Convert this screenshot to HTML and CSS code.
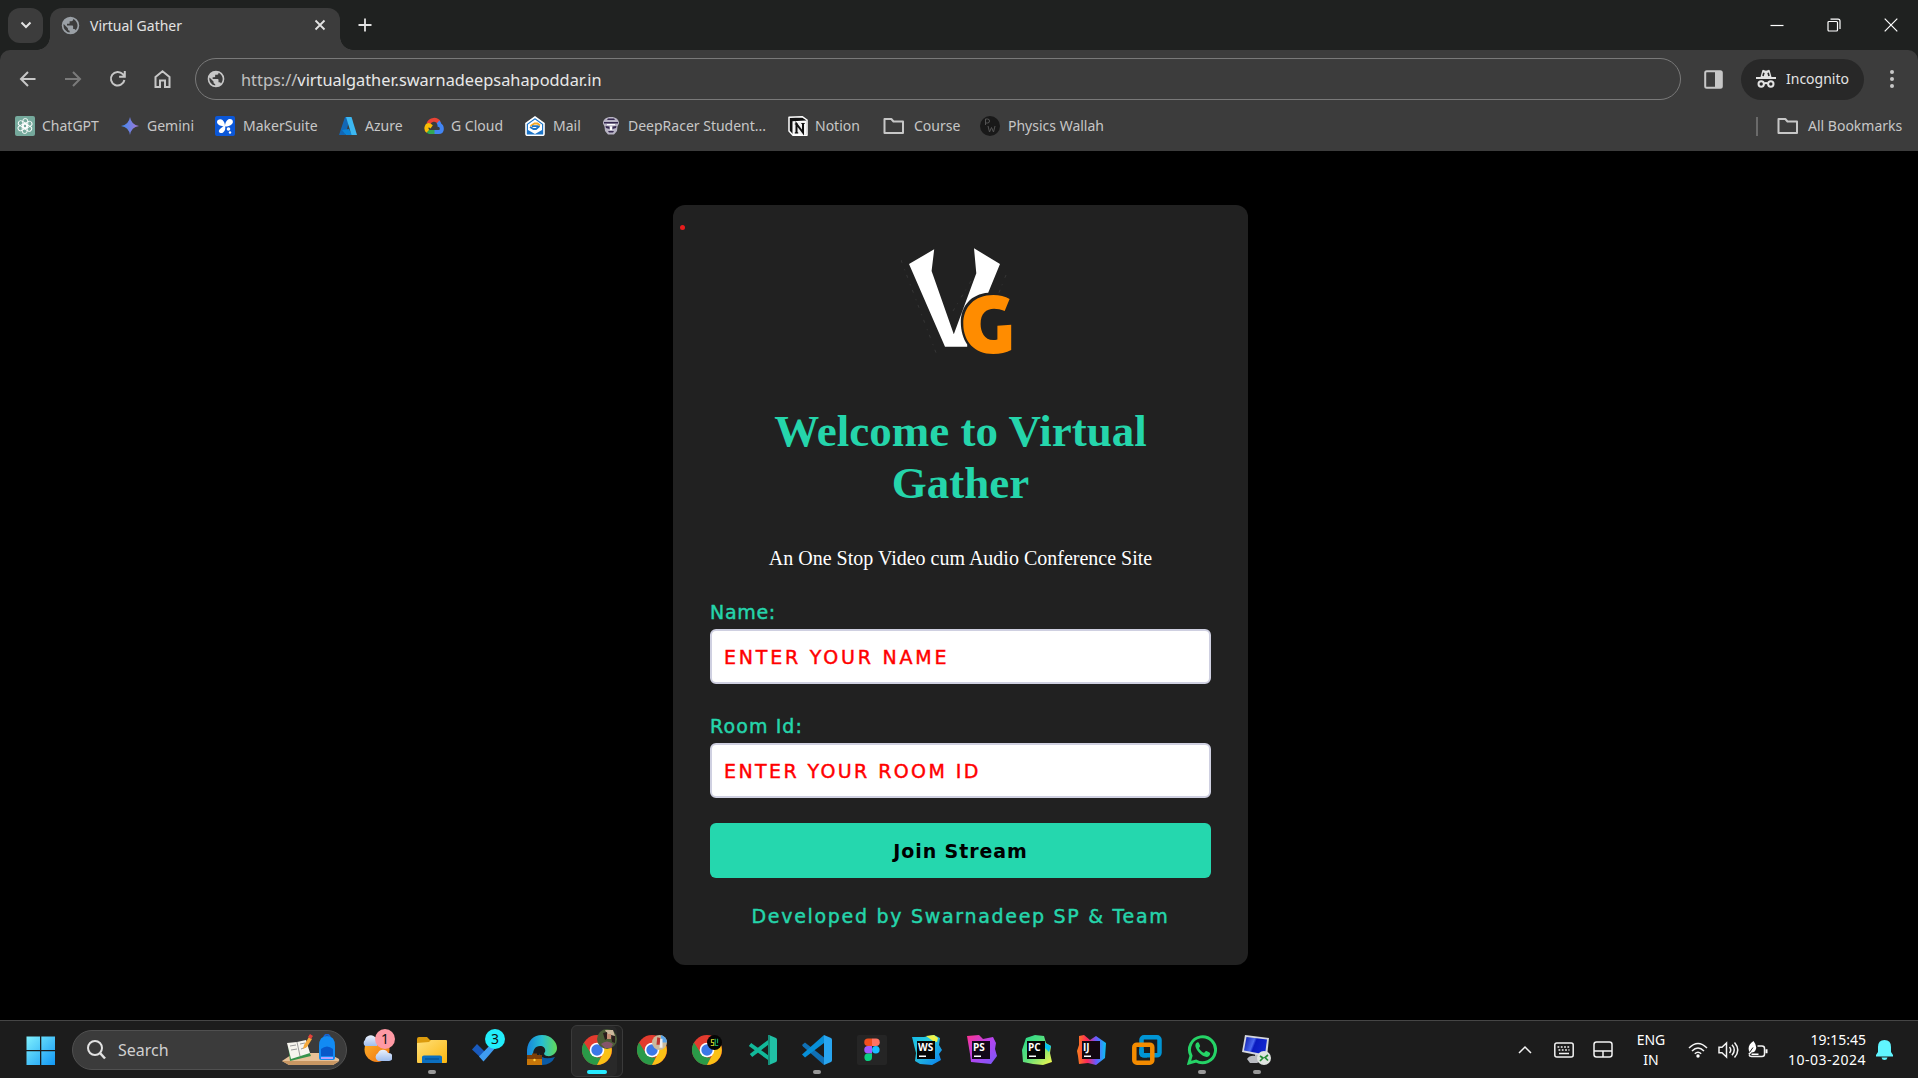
FILE: index.html
```html
<!DOCTYPE html>
<html lang="en">
<head>
<meta charset="utf-8">
<title>Virtual Gather</title>
<link rel="stylesheet" href="styles.css">
</head>
<body>
<svg class="defs" aria-hidden="true">
  <defs>
    <symbol id="globe" viewBox="0 0 24 24"><path fill="currentColor" d="M12 2a10 10 0 1 0 0 20 10 10 0 0 0 0-20zm-1 17.9A8 8 0 0 1 4.2 10.200L9 15v1a2 2 0 0 0 2 2zm6.900-2.500A2 2 0 0 0 16 16h-1v-3a1 1 0 0 0-1-1H8v-2h2a1 1 0 0 0 1-1V7h2a2 2 0 0 0 2-2v-.4a8 8 0 0 1 2.900 12.800z"/></symbol>
    <symbol id="folder" viewBox="0 0 22 18"><path fill="none" stroke="currentColor" stroke-width="2" stroke-linejoin="round" d="M1.500 2h6.800l2.200 2.500h9.500v11.500H1.500z"/></symbol>
    <symbol id="chrome" viewBox="0 0 30 30">
      <circle cx="15" cy="15" r="15" fill="#e33b2e"/>
      <path fill="#2a9a48" d="M15 30A15 15 0 0 1 2 7.500L9 18.500l6 4 4 0z"/>
      <path fill="#fbc116" d="M28 7.800A15 15 0 0 1 15 30l6-11.500 1-6-7-4.700z"/>
      <circle cx="15" cy="15" r="7.300" fill="#fff"/><circle cx="15" cy="15" r="5.700" fill="#3b78e7"/>
    </symbol>
    <linearGradient id="win" x2="1" y2="1"><stop stop-color="#7ff0fd"/><stop offset="1" stop-color="#1298f5"/></linearGradient>
    <linearGradient id="fold" x2="1" y2="1"><stop stop-color="#ffe07a"/><stop offset="1" stop-color="#fbb60f"/></linearGradient>
    <linearGradient id="gem" x2="1"><stop stop-color="#3d8bf0"/><stop offset="1" stop-color="#a477d6"/></linearGradient>
    <linearGradient id="edge" x2="1"><stop stop-color="#1685dc"/><stop offset=".5" stop-color="#27bfd1"/><stop offset="1" stop-color="#62d957"/></linearGradient>
    <linearGradient id="ws" x2="1" y2="1"><stop stop-color="#10b8ec"/><stop offset=".35" stop-color="#2bc9d9"/><stop offset="1" stop-color="#087cf0"/></linearGradient>
    <linearGradient id="ps" x2="1" y2="1"><stop stop-color="#ff318c"/><stop offset=".5" stop-color="#b345f1"/><stop offset="1" stop-color="#765af8"/></linearGradient>
    <linearGradient id="pc" x2="1" y2="1"><stop stop-color="#21d789"/><stop offset=".5" stop-color="#5fe07c"/><stop offset="1" stop-color="#fcf84a"/></linearGradient>
    <linearGradient id="ij" x2="1"><stop stop-color="#fc801d"/><stop offset=".35" stop-color="#fe2857"/><stop offset=".65" stop-color="#6b57ff"/><stop offset="1" stop-color="#07c3f2"/></linearGradient>
    <linearGradient id="sun" x2="1" y2="1"><stop stop-color="#ffb72b"/><stop offset="1" stop-color="#ee6f12"/></linearGradient>
    <linearGradient id="cloud" y2="1" x2="0"><stop stop-color="#eaf1fc"/><stop offset="1" stop-color="#9fbdee"/></linearGradient>
    <linearGradient id="screen" x2="1" y2=".3"><stop stop-color="#0716a8"/><stop offset=".45" stop-color="#4a68ef"/><stop offset=".55" stop-color="#0a1bc0"/><stop offset="1" stop-color="#1226cf"/></linearGradient>
  </defs>
</svg>

<div class="browser">
<header class="tabstrip">
  <button class="tab-search" aria-label="Search tabs"><svg width="12" height="12" viewBox="0 0 12 12"><path class="ln2" d="M1.500 3.500L6 8l4.500-4.500"/></svg></button>
  <div class="tab">
    <svg class="favicon" width="21" height="21"><use href="#globe"/></svg>
    <span class="tab-title">Virtual Gather</span>
    <svg width="12" height="12" viewBox="0 0 12 12"><path class="ln" d="M1.500 1.500l9 9M10.500 1.500l-9 9"/></svg>
  </div>
  <svg class="plus" width="14" height="14" viewBox="0 0 14 14"><path class="ln" d="M7 .5v13M.5 7h13"/></svg>
  <div class="window-controls">
    <svg width="14" height="14" viewBox="0 0 14 14"><path class="thin" d="M.5 7.500h13"/></svg>
    <svg width="14" height="14" viewBox="0 0 14 14"><path class="thin" d="M2 3.500h7.500a1 1 0 0 1 1 1V12a1 1 0 0 1-1 1H2a1 1 0 0 1-1-1V4.500a1 1 0 0 1 1-1zM3.500 1.200h7.500a2 2 0 0 1 2 2V11"/></svg>
    <svg width="14" height="14" viewBox="0 0 14 14"><path class="thin" d="M.7.700l12.600 12.600M13.300.700L.7 13.300"/></svg>
  </div>
</header>

<section class="toolbar">
  <div class="address-row">
    <nav class="nav">
      <svg width="20" height="20" viewBox="0 0 20 20"><path class="ln2" d="M17.500 10H3M10 3l-7 7 7 7"/></svg>
      <svg class="off" width="20" height="20" viewBox="0 0 20 20"><path class="ln2" d="M2 10h14.500M10 3l7 7-7 7"/></svg>
      <svg width="20" height="20" viewBox="0 0 20 20"><path class="ln2" d="M16.400 11A6.800 6.800 0 1 1 14.800 5.200l2 2.300M16.800 2v5.700h-5.700"/></svg>
      <svg width="20" height="20" viewBox="0 0 20 20"><path class="ln2" d="M2.500 8L9.500 2.300 16.500 8v10H12v-6.500H7V18H2.500z"/></svg>
    </nav>
    <div class="omnibox"><svg width="20" height="20"><use href="#globe"/></svg><span class="url"><span class="scheme">https://</span>virtualgather.swarnadeepsahapoddar.in</span></div>
    <svg class="panel" width="19" height="19" viewBox="0 0 19 19"><rect x="1.200" y="1.200" width="16.600" height="16.600" rx="1.500" fill="none" stroke="currentColor" stroke-width="2"/><path fill="currentColor" d="M11 1h7v17h-7z"/></svg>
    <div class="incognito">
      <svg width="20" height="20" viewBox="0 0 20 20"><path fill="#e3e3e3" d="M4.500 8l1.800-6.500q.3-.9 1.200-.6l2.500.8 2.500-.8q.9-.3 1.200.6L15.500 8H20v2H0V8z"/><path stroke="#282828" stroke-width="1.600" d="M7 7l.9-3.300M13 7l-.9-3.300"/><g fill="none" stroke="#e3e3e3" stroke-width="2"><circle cx="5.200" cy="15" r="2.700"/><circle cx="14.800" cy="15" r="2.700"/><path d="M8 14.600q2-1.200 4 0"/></g></svg>
      <span>Incognito</span>
    </div>
    <svg class="dots" width="6" height="20" viewBox="0 0 6 20" fill="currentColor"><circle cx="3" cy="3" r="2"/><circle cx="3" cy="10" r="2"/><circle cx="3" cy="17" r="2"/></svg>
  </div>
  <div class="bookmarks">
    <div class="bm bm-chatgpt"><svg viewBox="0 0 20 20"><rect width="20" height="20" rx="2" fill="#75a99c"/><g fill="none" stroke="#fff" stroke-width=".9"><rect x="7.800" y="2.500" width="5" height="9.500" rx="2.500"/><rect x="7.800" y="2.500" width="5" height="9.500" rx="2.500" transform="rotate(60 10 10)"/><rect x="7.800" y="2.500" width="5" height="9.500" rx="2.500" transform="rotate(120 10 10)"/><rect x="7.800" y="2.500" width="5" height="9.500" rx="2.500" transform="rotate(180 10 10)"/><rect x="7.800" y="2.500" width="5" height="9.500" rx="2.500" transform="rotate(240 10 10)"/><rect x="7.800" y="2.500" width="5" height="9.500" rx="2.500" transform="rotate(300 10 10)"/></g></svg><span>ChatGPT</span></div>
    <div class="bm bm-gemini"><svg viewBox="0 0 20 20"><path fill="url(#gem)" d="M10 1q1.200 7.800 9 9-7.800 1.200-9 9-1.200-7.800-9-9 7.800-1.200 9-9z"/></svg><span>Gemini</span></div>
    <div class="bm bm-maker"><svg viewBox="0 0 20 20"><rect width="20" height="20" rx="2" fill="#0b57d8"/><path fill="#fff" d="M10 10.500C7 10.500 2 9 2 6s4-3.500 5.500-2S10 7 10 10.500zM10 10.500C10 7 11.500 3.500 14.500 3s4.500 3 2.500 5-4 2.500-7 2.500zM10 10c1 3-.7 6.500-3 7s-4.200-1.500-2.500-3.500S8 10.500 10 10z"/><circle cx="13.500" cy="13" r="1.800" fill="#fff"/><circle cx="15" cy="16.500" r="1.200" fill="#fff"/></svg><span>MakerSuite</span></div>
    <div class="bm bm-azure"><svg viewBox="0 0 20 20"><path fill="#1267b5" d="M7 1h5L7.500 19H1z"/><path fill="#0a84d8" d="M4 14l7-1 3 6H8z"/><path fill="#3cb8f2" d="M8 1h5.500L19 19h-5.500z"/></svg><span>Azure</span></div>
    <div class="bm bm-cloud"><svg viewBox="0 0 20 20" fill="none" stroke-width="4"><path stroke="#ea4335" d="M4.500 7.500a6 6 0 0 1 10.500-1"/><path stroke="#4285f4" d="M14 6a5 5 0 0 1 1.500 3.200c3 1 3.500 6.800-.8 6.800H10"/><path stroke="#34a853" d="M10.500 16H5.500l-2-1"/><path stroke="#fbbc05" d="M3.800 15.200C1 12.500 3 8.500 5.500 9.300l2.200 1.500"/></svg><span>G Cloud</span></div>
    <div class="bm bm-mail"><svg viewBox="0 0 20 20"><path fill="#1c74c8" stroke="#fff" stroke-width="1.600" d="M1 7.500L10 1l9 6.500V18q0 1.300-1.500 1.300h-15Q1 19.300 1 18z"/><path fill="#fff" d="M3 8.500L10 3.500l7 5V14l-7 4-7-4z"/><path fill="none" stroke="#f4a623" stroke-width="1.800" d="M5.500 10l4-2.500h3l2.500 2"/><path fill="none" stroke="#1c74c8" stroke-width="1.800" d="M14.500 10l-3.500 3H8.500L5 11M7 10.200h6"/></svg><span>Mail</span></div>
    <div class="bm bm-racer"><svg viewBox="0 0 20 20"><path fill="#b8b4c4" d="M10 1c5 0 8 2.500 8 6.500l-1.500 3L16 15l-3 3.500H7L4 15l-.5-4.500L2 7.500C2 3.500 5 1 10 1z"/><path fill="#35284f" d="M7 2.500h6l1 1.500H6zM3 6h14v1.500H3zM4.500 10l4 .5v2.500L5 12zM15.500 10l-4 .5v2.500l3.500-1zM7 15h6l-1 1.500H8z"/><path fill="#fff" d="M6 8h8v1.300H6zM9 10.500h2V14H9z"/></svg><span>DeepRacer Student...</span></div>
    <div class="bm bm-notion"><svg viewBox="0 0 20 20"><path fill="#111" stroke="#fff" stroke-width="1.500" stroke-linejoin="round" d="M1 1.300L14.500.800 19 4v15.200L5 19.300 1 15z"/><path fill="#fff" d="M4.500 5.200L18.500 4.500v14.300L4.500 19.200z"/><path fill="#111" d="M5.500 6.200l12-.6v12.200l-12 .5z" opacity=".06"/><path fill="none" stroke="#111" stroke-width="2" d="M8.500 17V8l6.500 8.500V7.300"/><path stroke="#111" stroke-width="1.200" d="M6.800 8h3M13.300 7.500h3.400M6.800 16.800h3.400"/></svg><span>Notion</span></div>
    <div class="bm bm-course"><svg viewBox="0 0 22 18"><use href="#folder"/></svg><span>Course</span></div>
    <div class="bm bm-pw"><svg viewBox="0 0 20 20"><circle cx="10" cy="10" r="10" fill="#191919"/><path fill="none" stroke="#555" d="M5.500 9V3h2a2 2 0 0 1 0 4h-2M8 10l1.500 6 2-4.500 2 4.500L15 10"/></svg><span>Physics Wallah</span></div>
    <i class="rule"></i>
    <div class="bm bm-all"><svg viewBox="0 0 22 18"><use href="#folder"/></svg><span>All Bookmarks</span></div>
  </div>
</section>
</div>

<main class="page">
  <form class="card">
    <i class="rec"></i>
    <svg class="logo" width="120" height="128" viewBox="900 236 120 128" role="img" aria-label="VG">
      <path fill="#fff" d="M908 264l25.200-14.700-2.600 21.700 22.200 63.300 22.500-61-2.300-25L999 264l-11.800 28.700C970 294 960 306 959.800 322c0 9 2.500 17 6.400 22.500v2.200H944z"/>
      <path fill="#ff8c00" d="M1008.600 299l-4.900 12c-13-5-24.100-2-24.100 13 0 9 5 18.500 16.800 15.500v-13.800l13.800-1V350c-5 2.500-11 4-18 4-19 0-29.900-13-29.900-30s11-29 30-29c6 0 12 1.500 16.300 4z"/>
      <path fill="none" stroke="#3b3b3b" stroke-width=".8" stroke-dasharray="3 7 1 5" d="M900 260l37 98M1005 275l-8 20M970 281l-18 30"/>
    </svg>
    <h1>Welcome to Virtual Gather</h1>
    <p class="subtitle">An One Stop Video cum Audio Conference Site</p>
    <label class="name-label" for="name">Name:</label>
    <input id="name" class="name-input" type="text" placeholder="ENTER YOUR NAME">
    <label class="room-label" for="room">Room Id:</label>
    <input id="room" type="text" placeholder="ENTER YOUR ROOM ID">
    <button class="join" type="button">Join Stream</button>
    <p class="credit">Developed by Swarnadeep SP &amp; Team</p>
  </form>
</main>

<footer class="taskbar">
  <svg class="start" width="30" height="30" viewBox="0 0 30 30" fill="url(#win)"><path d="M.5.500H14V14H.500zM15.300.500H29V14H15.300zM.5 15.300H14V29H.500zM15.300 15.300H29V29H15.300z"/></svg>
  <div class="search">
    <svg width="20" height="20" viewBox="0 0 20 20" fill="none" stroke="#e2e2e2" stroke-width="2"><circle cx="8" cy="8" r="7"/><path d="M13 13l5 5.500" stroke-width="2.500"/></svg>
    <span>Search</span>
    <svg class="scene" width="58" height="32" viewBox="0 0 58 32">
      <path fill="#e8c197" d="M0 27l12-8h34l11 6q1 1-1 3l-5 3H7z"/><path fill="#c99763" d="M0 27h57l-6 4H7z"/>
      <path fill="#37934b" d="M6 11l18-1 5 12-21 5z"/><path fill="#f7f5ee" d="M5 9l10-1 9-2 4 13-19 6z"/><path fill="none" stroke="#999" d="M15 8l3 14M8 12l6-1M9 16l6-1M18 10l5-1M19 15l5-2"/>
      <path fill="#f5a93b" d="M22 11l5-8 3 2-5 8-4 2z"/><path fill="#e5413a" d="M26 3l2-3 3 2-2 3z"/>
      <path fill="none" stroke="#1764d1" stroke-width="2" d="M42 3q3-5 6 0"/><path fill="#128bf3" d="M37 12q0-10 8-10t8 10v12q0 2-2 2H39q-2 0-2-2z"/><path fill="#0858ca" d="M39 15q6-5 12 0v7H39z"/><path fill="#b6a0ff" d="M39 23h12v2H39z"/>
    </svg>
  </div>
  <div class="apps">
    <div class="app"><svg viewBox="0 0 30 30"><circle cx="15" cy="14.500" r="12.500" fill="url(#sun)"/><path fill="url(#cloud)" d="M3 11a4 4 0 0 1 0-6 6 6 0 0 1 10-3q4 4 2 9z"/><path fill="url(#cloud)" d="M16 26a4.500 4.500 0 0 1 0-8 5.500 5.500 0 0 1 10 0 4 4 0 0 1 1 8z"/></svg><b class="badge pink">1</b></div>
    <div class="app open"><svg viewBox="0 0 30 30"><path fill="#dc9b0d" d="M0 4q0-2 2-2h8l3 3h14v10H0z"/><path fill="url(#fold)" d="M0 8l12-1 2-2h15q1 0 1 1v21q0 1-1 1H1q-1 0-1-1z"/><path fill="#0c6fc0" d="M5 28v-6q0-1.500 2-1.500h16q2 0 2 1.500v6z"/><path stroke="#064e8f" stroke-width="1.200" d="M8 24h14"/></svg></div>
    <div class="app"><svg viewBox="0 0 30 30"><path fill="#195abd" d="M0 14.500l5-5.500 9 9-4.500 5.500z"/><path fill="#3f9cf0" d="M7 21.500L22 6l3 5-13.500 15.500z"/></svg><b class="badge aqua">3</b></div>
    <div class="app"><svg viewBox="0 0 30 30"><path fill="url(#edge)" d="M0 20C-1 8 5 0 15 0s15 8 15 13-5 9-10 8c-4-1-3-3-2-4 1-3-1-6-5-6-5 0-7 4-7 9z"/><path fill="#0b5ba6" d="M12 18q3 8 16 4-4 8-13 8z"/><path fill="#c87609" d="M0 20h15v10H0z"/><path fill="#7d3f08" d="M5 18.500h5V20h5v4H0v-4h5z"/><circle cx="7.500" cy="25" r="1.200" fill="#ffd44a"/></svg></div>
    <div class="app active"><svg viewBox="0 0 30 30"><use href="#chrome"/></svg><svg class="face" viewBox="0 0 20 20"><circle cx="10" cy="10" r="10" fill="#4b5d37"/><path fill="#ccb99c" d="M8 1h8l2 6-6 2z"/><path fill="#2a1c1c" d="M6 4l4-1 1 6-3 2zM14 6l4 1v7l-3-1z"/><path fill="#c58e73" d="M10 5h4v5h-4z"/><path fill="#85556a" d="M4 15q6-5 12 0l-2 4H8z"/></svg></div>
    <div class="app"><svg viewBox="0 0 30 30"><use href="#chrome"/></svg><svg class="face small" viewBox="0 0 20 20"><circle cx="10" cy="10" r="10" fill="#cab99c"/><path fill="#5aa5e8" d="M12 0q8 3 8 10h-8z"/><path fill="#ba3430" d="M7 3l4 1v9H6z"/><path fill="#eee" d="M11 5h3v12h-4z"/></svg></div>
    <div class="app"><svg viewBox="0 0 30 30"><use href="#chrome"/></svg><svg class="face small" viewBox="0 0 20 20"><circle cx="10" cy="10" r="10" fill="#050505"/><path fill="none" stroke="#b4bc20" stroke-width="1.600" d="M10 6H6v4h3v4H5"/><path fill="none" stroke="#15a65b" stroke-width="1.600" d="M11 5v9h4M14 5v6"/></svg></div>
    <div class="app"><svg viewBox="0 0 30 30"><path fill="none" stroke="#12b99a" stroke-width="4" d="M23 6L4 20.500M3 9.500L23 24"/><path fill="#20c0a5" d="M22 0l7 3q1 .5 1 2v20q0 1.500-1 2l-7 3z"/><path fill="#158e79" d="M21 0h2v30h-2z"/></svg></div>
    <div class="app open"><svg viewBox="0 0 30 30"><path fill="#1070b5" d="M0 10l3-2.500 19 15V30L1 11.500z"/><path fill="#078fd8" d="M0 19.500L22 0v8L3 22.500z"/><path fill="#28a5f0" d="M22 0l7 3q1 .5 1 2v20q0 1.500-1 2l-7 3z"/></svg></div>
    <div class="app"><svg viewBox="0 0 30 30"><rect width="30" height="30" rx="2" fill="#252525"/><path fill="#f24e1e" d="M15 3.500h-4a3.700 3.700 0 0 0 0 7.500h4z"/><path fill="#ff7262" d="M15 3.500h4a3.700 3.700 0 0 1 0 7.500h-4z"/><path fill="#a259ff" d="M15 11h-4a3.700 3.700 0 0 0 0 7.500h4z"/><circle cx="18.800" cy="14.800" r="3.800" fill="#1abcfe"/><path fill="#0acf83" d="M15 18.500h-4a3.800 3.800 0 1 0 4 3.800z"/></svg></div>
    <div class="app jb"><svg viewBox="0 0 30 30"><path fill="url(#ws)" d="M0 2l12 0L22 0l6 3-1 7 3 5-3 4 2 6-9 5-12-1-5-3 1-8z"/><path fill="#eef44b" d="M14 1l8-1 4 3-1 4-4-1z"/><path fill="#050505" d="M5 6h18v18H5z"/><path fill="#fff" d="M7 20.500h7V22H7z"/></svg><b>WS</b></div>
    <div class="app jb"><svg viewBox="0 0 30 30"><path fill="url(#ps)" d="M0 1l12-1 4 4 10-2 3 6-1 6 2 7-6 8-10-1-10-1-1-8z"/><path fill="#100718" d="M5 6h18v18H5z"/><path fill="#fff" d="M7 20.500h7V22H7z"/></svg><b>PS</b></div>
    <div class="app jb"><svg viewBox="0 0 30 30"><path fill="url(#pc)" d="M4 3l9-3 9 1 2 7 5 3-1 7 2 9-9 3-10-1-10-2-1-12z"/><path fill="#07c3f2" d="M23 8l6 3-2 6-4-4z"/><path fill="#050505" d="M5 6h18v18H5z"/><path fill="#fff" d="M7 20.500h7V22H7z"/></svg><b>PC</b></div>
    <div class="app jb"><svg viewBox="0 0 30 30"><path fill="url(#ij)" d="M2 1l5-1 6 5 6-4 10 7-1 15-9 7-8-2-9 1-1-8-1-5 2-6z"/><path fill="#120710" d="M5 6h18v18H5z"/><path fill="#fff" d="M7 20.500h7V22H7z"/></svg><b>IJ</b></div>
    <div class="app"><svg viewBox="0 0 30 30" fill="none" stroke-width="4.500"><rect x="9.500" y="2.300" width="18" height="18" rx="2.500" stroke="#0095d5"/><rect x="2.300" y="9.700" width="18" height="18" rx="2.500" stroke="#f38b00"/><path stroke="#0095d5" d="M9.500 14v4q0 2.300 2.500 2.300h3"/></svg></div>
    <div class="app open"><svg viewBox="0 0 30 30"><path fill="none" stroke="#25d366" stroke-width="3" d="M2 28l2-7.200A13 13 0 1 1 9 26z"/><path fill="#25d366" d="M10 7.500c-3 2-1.500 6 2 10s8 5.500 10 3.500 1-3.300 0-3.700l-2.500-1.200c-1.500-.5-1.500 2-2.800 1.700-2-.8-4-3-4.700-4.600 0-1 1.600-1.400 1-2.700l-1.200-2.700q-.6-1-1.800-.3z"/></svg></div>
    <div class="app open"><svg viewBox="0 0 30 30"><path fill="#b8bac0" d="M5 24q3-4 8-3v-3h5v4l3 3-6 3H8z"/><path fill="#d4d6de" d="M3 0l24 3-2 19L0 17z"/><path fill="url(#screen)" d="M4.500 2l20.500 2.500-2 15L2 15.500z"/><circle cx="22" cy="23" r="7" fill="#dfe3df"/><path fill="none" stroke="#278c35" stroke-width="1.700" d="M18 21l3 2-3 3M26 20l-3 2.500 3 3"/></svg></div>
  </div>
  <div class="tray">
    <svg width="16" height="10" viewBox="0 0 16 10"><path class="tr" stroke-width="2" d="M2 8l6-6 6 6"/></svg>
    <svg class="kbd" width="20" height="16" viewBox="0 0 20 16"><rect class="tr" x=".8" y="1" width="18.400" height="14" rx="2"/><path class="tr" stroke-dasharray="1.800 1.500" d="M3.500 5h13M4.500 8h11"/><path class="tr" d="M5 11.500h10"/></svg>
    <svg class="pad" width="20" height="17" viewBox="0 0 20 17"><rect class="tr" x="1" y="1" width="18" height="15" rx="2.500"/><path class="tr" d="M1 10h18M10 10v6"/></svg>
    <div class="lang"><span>ENG</span><span>IN</span></div>
    <svg class="wifi" width="20" height="16" viewBox="0 0 20 16"><path class="tr" d="M1 6q9-9 18 0M4 9q6-6 12 0M6.800 11.800q3.200-3 6.400 0"/><circle cx="10" cy="14" r="1.700" fill="#fff"/></svg>
    <svg class="snd" width="21" height="18" viewBox="0 0 21 18"><path class="tr" d="M1 6.300h3L8.500 2v14L4 11.700H1zM11.500 6q2.500 3 0 6M14 3.800q4.500 5 0 10.400M16.500 1.500q6.500 7.500 0 15"/></svg>
    <svg class="bat" width="21" height="18" viewBox="0 0 21 18"><path class="tr" d="M10.500 5H15q2.500 0 2.500 2.300v6q0 2.200-2.500 2.200H4.500Q2.500 15.500 2.200 14"/><path fill="#fff" d="M18.500 8.300h2v4h-2zM4.500 12.500h7V14h-7zM6.500 0q3.500 4.500 2.500 8-1 3.500-4.500 3.500l-2 2.500-1.200-1L2.500 11Q-.5 5 6.500 0z"/><path stroke="#1c1c1c" d="M2.500 11.500l3.500-5"/></svg>
    <div class="clock"><span>19:15:45</span><span class="date">10-03-2024</span></div>
    <svg class="bell" width="17" height="20" viewBox="0 0 17 20" fill="#60f5ff"><path d="M8.500 0Q15 0 15 7v5l2 3v1.500H0V15l2-3V7q0-7 6.500-7zM5.500 17.500h6Q11 20 8.500 20t-3-2.500z"/></svg>
  </div>
</footer>
</body>
</html>
```
FILE: styles.css
```css
* { box-sizing: border-box; }
body { margin: 0; width: 1918px; height: 1078px; overflow: hidden; background: #000; color: #e3e3e3; font: 14px/20px "Noto Sans", "Open Sans", sans-serif; display: flex; flex-direction: column; }
svg { display: block; flex: none; }
.defs { position: absolute; width: 0; height: 0; }
.ln, .ln2 { fill: none; stroke: currentColor; stroke-width: 1.8; }
.ln2 { stroke-width: 2; }
.thin { fill: none; stroke: #fff; stroke-width: 1.2; }

/* tab strip */
.browser { flex: none; background: #1f2120; }
.tabstrip { height: 50px; display: flex; align-items: center; padding-left: 8px; }
.tab-search { width: 35px; height: 35px; border: 0; border-radius: 12px; background: #3c3c3c; color: #e3e3e3; display: grid; place-items: center; padding: 0; }
.tab { position: relative; width: 290px; height: 42px; align-self: flex-end; margin-left: 7px; padding: 0 14px 8px 10px; border-radius: 12px 12px 0 0; background: #3c3c3c; display: flex; align-items: center; }
.tab::before, .tab::after { content: ""; position: absolute; bottom: 0; width: 13px; height: 13px; }
.tab::before { left: -13px; background: radial-gradient(circle at 0 0, transparent 12.5px, #3c3c3c 13px); }
.tab::after { right: -13px; background: radial-gradient(circle at 100% 0, transparent 12.5px, #3c3c3c 13px); }
.favicon { color: #9aa0a6; }
.tab-title { flex: 1; margin-left: 9px; padding-top: 1px; }
.plus { margin-left: 18px; }
.window-controls { margin-left: auto; display: flex; gap: 43px; padding-right: 20px; }

/* toolbar */
.toolbar { height: 101px; background: #3c3c3c; color: #c7c7c7; border-radius: 10px 10px 0 0; padding-top: 8px; }
.address-row { height: 42px; display: flex; align-items: center; }
.nav { width: 195px; display: flex; gap: 25px; padding-left: 18px; }
.off { opacity: .45; }
.omnibox { width: 1486px; height: 42px; border: 1px solid #797979; border-radius: 21px; display: flex; align-items: center; padding-left: 10px; }
.url { margin-left: 15px; padding-top: 1px; font-size: 16.35px; color: #e8e8e8; }
.scheme { color: #c0c0c0; }
.panel { margin-left: 23px; }
.incognito { width: 123px; height: 41px; margin-left: 18px; border-radius: 21px; background: #282828; color: #e3e3e3; display: flex; align-items: center; gap: 10px; padding-left: 15px; }
.dots { margin-left: 25px; }
.bookmarks { display: flex; align-items: center; height: 22px; margin-top: 15px; padding-left: 15px; white-space: nowrap; }
.bm { display: flex; align-items: center; gap: 7px; }
.bm svg { width: 20px; height: 20px; }
.bm-chatgpt { width: 105px; }
.bm-gemini { width: 95px; }
.bm-maker { width: 123px; gap: 8px; }
.bm-azure { width: 86px; }
.bm-cloud { width: 101px; }
.bm-mail { width: 76px; gap: 8px; }
.bm-racer { width: 187px; }
.bm-notion { width: 95px; }
.bm-course { width: 97px; gap: 9px; }
.bm-course svg, .bm-all svg { width: 22px; height: 18px; }
.bm-pw { width: 776px; gap: 8px; }
.rule { width: 2px; height: 19px; background: #6a6a6a; }
.bm-all { margin-left: 19px; gap: 9px; }

/* web page */
.page { height: 869px; flex: none; padding-top: 54px; display: flex; justify-content: center; align-items: flex-start; }
.card { position: relative; width: 575px; height: 760px; margin-left: 3px; padding: 31px 37px 0; border-radius: 12px; background: #212121; display: flex; flex-direction: column; }
.rec { position: absolute; left: 7px; top: 20px; width: 5px; height: 5px; border-radius: 50%; background: #e81c1c; }
.logo { align-self: center; }
h1 { margin: 41px 0 0; text-align: center; font: bold 45px/52px "Liberation Serif", serif; color: #25d5ab; padding: 0 50px; }
.subtitle { margin: 38px 0 0; text-align: center; font: 20px/23px "Liberation Serif", serif; color: #fff; }
label, input, .join, .credit { font-family: "DejaVu Sans", sans-serif; font-size: 19px; line-height: 24px; }
label, .credit { color: #25d5ab; -webkit-text-stroke: .45px #25d5ab; }
.name-label { margin-top: 30px; letter-spacing: .7px; }
.room-label { margin-top: 30px; letter-spacing: 1.1px; }
input { height: 55px; margin: 5px 0 0; padding: 0 12px; border: 2px solid #cfd0e1; border-radius: 6px; background: #fff; letter-spacing: 2.4px; }
.name-input { letter-spacing: 2.8px; }
input::placeholder { color: #f00; opacity: 1; -webkit-text-stroke: .45px #f00; }
.join { height: 55px; margin-top: 25px; border: 0; border-radius: 6px; background: #25d7ae; color: #000; font-weight: bold; letter-spacing: .9px; }
.credit { margin: 26px 0 0; text-align: center; letter-spacing: 1.7px; white-space: nowrap; }

/* taskbar */
.taskbar { height: 58px; flex: none; border-top: 1px solid #454545; background: #1c1c1c; display: flex; align-items: center; padding-left: 26px; }
.start { margin-top: 2px; }
.search { width: 275px; height: 40px; margin: 1px 2px 0 16px; border: 1px solid #505050; border-radius: 20px; background: #3b3b3b; display: flex; align-items: center; padding-left: 14px; font-size: 16px; color: #d0d0d0; }
.search span { width: 164px; margin-left: 11px; }
.apps { display: flex; height: 57px; }
.app { position: relative; width: 55px; height: 57px; padding-top: 14px; display: flex; justify-content: center; align-items: flex-start; }
.app > svg { width: 30px; height: 30px; position: relative; }
.open::after, .active::after { content: ""; position: absolute; bottom: 4px; width: 8px; height: 4px; border-radius: 2px; background: #999; }
.active::after { width: 20px; background: #26eaff; }
.active::before { content: ""; position: absolute; left: 2px; top: 4px; width: 50px; height: 50px; border: 1px solid #3a3a3a; border-radius: 6px; background: #292929; box-shadow: inset -5px 0 0 #222; }
.app > .face { position: absolute; left: 28px; top: 8px; width: 20px; height: 20px; }
.app > .small { left: 28px; top: 14px; width: 15px; height: 15px; }
.badge { position: absolute; left: 26px; top: 8px; width: 20px; height: 20px; border-radius: 50%; font: 14px/20px "Noto Sans", sans-serif; text-align: center; color: #111; }
.pink { background: #ff99a4; }
.aqua { background: #22edfb; }
.jb b { position: absolute; left: 19px; top: 20px; color: #fff; font: bold 10px/12px "Open Sans", sans-serif; }
.tray { margin-left: auto; display: flex; align-items: center; padding-right: 25px; color: #fff; }
.tr { fill: none; stroke: #f2f2f2; stroke-width: 1.5; }
.kbd { margin-left: 21px; }
.pad { margin-left: 19px; }
.lang { width: 30px; margin-left: 23px; padding-top: 1px; display: flex; flex-direction: column; align-items: center; }
.wifi { margin-left: 22px; }
.snd { margin-left: 10px; }
.bat { margin-left: 8px; }
.clock { width: 98px; display: flex; flex-direction: column; align-items: flex-end; }
.date { letter-spacing: .5px; }
.bell { margin-left: 10px; }
```
